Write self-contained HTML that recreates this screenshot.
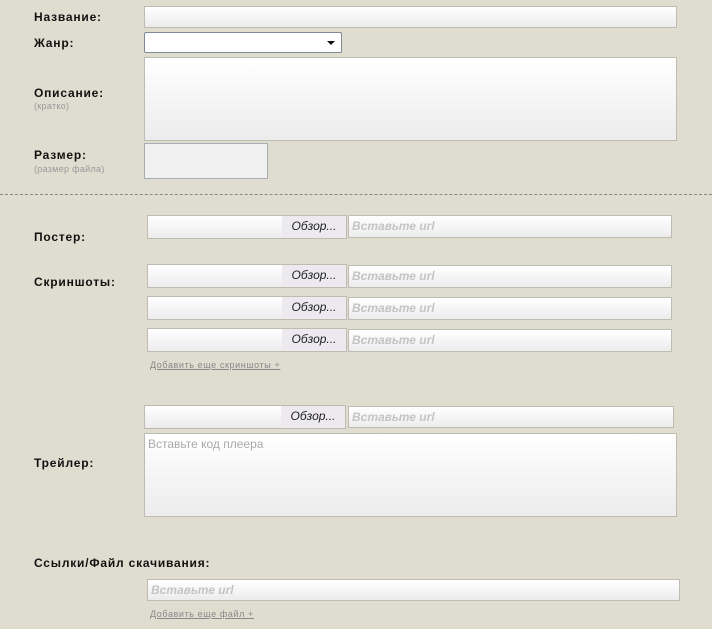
<!DOCTYPE html>
<html><head><meta charset="utf-8"><style>
body{margin:0;width:712px;height:629px;background:#dfddd0;font-family:"Liberation Sans",Arial,sans-serif;position:relative;overflow:hidden}
.a{position:absolute;box-sizing:border-box}
.l{position:absolute;left:34px;font-weight:bold;font-size:12px;color:#111;letter-spacing:0.8px}
.s{position:absolute;left:34px;font-size:9px;color:#999;letter-spacing:0.3px}
.in{border:1px solid #bebcb1;background:linear-gradient(#fff,#ececec)}
.bt{position:absolute;right:0;top:0;bottom:0;width:64px;background:#eceaee;font-style:italic;font-size:12px;line-height:21px;text-align:center;color:#222}
.ph{font-style:italic;font-weight:bold;font-size:12px;color:#c4c4c4;padding-left:3px;line-height:21px}
.lk{position:absolute;left:150px;font-size:9px;color:#888;text-decoration:underline;letter-spacing:0.6px}
</style></head><body>
<div class="l" style="top:10px">Название:</div>
<div class="a in" style="left:144px;top:6px;width:533px;height:22px"></div>
<div class="l" style="top:36px">Жанр:</div>
<div class="a" style="left:144px;top:32px;width:198px;height:21px;background:#fff;border:1px solid #7f8a95;border-radius:2px"><div style="position:absolute;right:6px;top:8px;border-left:4px solid transparent;border-right:4px solid transparent;border-top:4px solid #111"></div></div>
<div class="l" style="top:86px">Описание:</div>
<div class="s" style="top:101px">(кратко)</div>
<div class="a in" style="left:144px;top:57px;width:533px;height:84px"></div>
<div class="l" style="top:148px">Размер:</div>
<div class="s" style="top:164px">(размер файла)</div>
<div class="a" style="left:144px;top:143px;width:124px;height:36px;background:#f0f0f0;border:1px solid #a8aeb4"></div>
<div class="a" style="left:0;top:194px;width:712px;border-top:1px dashed #8a8878"></div>

<div class="l" style="top:230px">Постер:</div>
<div class="a in" style="left:147px;top:215px;width:200px;height:24px"><div class="bt">Обзор...</div></div>
<div class="a in ph" style="left:348px;top:215px;width:324px;height:23px">Вставьте url</div>

<div class="l" style="top:275px">Скриншоты:</div>
<div class="a in" style="left:147px;top:264px;width:200px;height:24px"><div class="bt">Обзор...</div></div>
<div class="a in ph" style="left:348px;top:265px;width:324px;height:23px">Вставьте url</div>
<div class="a in" style="left:147px;top:296px;width:200px;height:24px"><div class="bt">Обзор...</div></div>
<div class="a in ph" style="left:348px;top:297px;width:324px;height:23px">Вставьте url</div>
<div class="a in" style="left:147px;top:328px;width:200px;height:24px"><div class="bt">Обзор...</div></div>
<div class="a in ph" style="left:348px;top:329px;width:324px;height:23px">Вставьте url</div>
<div class="lk" style="top:360px">Добавить еще скриншоты +</div>

<div class="a in" style="left:144px;top:405px;width:202px;height:24px"><div class="bt">Обзор...</div></div>
<div class="a in ph" style="left:348px;top:406px;width:326px;height:22px">Вставьте url</div>
<div class="l" style="top:456px">Трейлер:</div>
<div class="a in" style="left:144px;top:433px;width:533px;height:84px;font-size:12px;color:#aaa;padding:3px 3px">Вставьте код плеера</div>

<div class="l" style="top:556px">Ссылки/Файл скачивания:</div>
<div class="a in ph" style="left:147px;top:579px;width:533px;height:22px">Вставьте url</div>
<div class="lk" style="top:609px">Добавить еще файл +</div>
</body></html>
